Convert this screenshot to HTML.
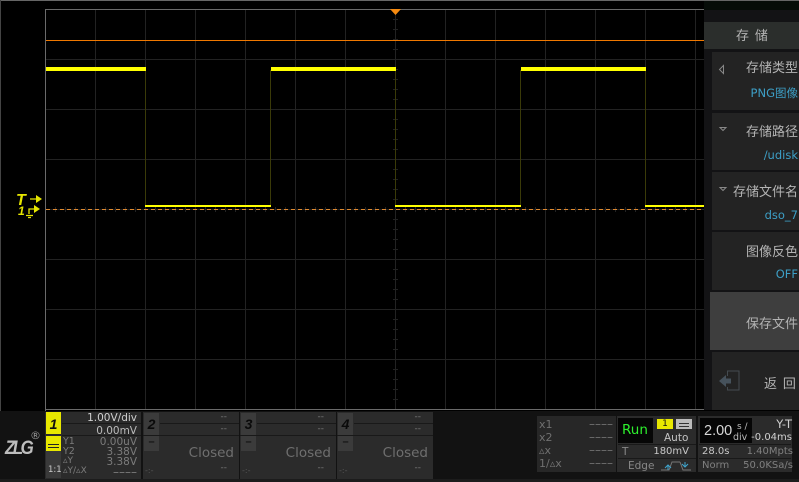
<!DOCTYPE html>
<html><head><meta charset="utf-8">
<style>
html,body{margin:0;padding:0;background:#000;}
#p{position:relative;width:799px;height:482px;overflow:hidden;background:#000;font-family:"DejaVu Sans","Liberation Sans","Noto Sans CJK SC",sans-serif;}
#p div{position:absolute;}
.t{white-space:nowrap;line-height:1;}
.r{text-align:right;}
.item{left:712px;width:87px;background:#232323;}
.cn{font-family:"Noto Sans CJK SC","WenQuanYi Zen Hei",sans-serif;font-size:13px;color:#b4b4b4;}
.bl{color:#3d9fc6;font-size:11.500px;}
.ch{background:#2b2b2b;width:96px;height:67px;top:412px;}
.sep{background:#191919;height:1px;}
.num{left:1px;top:1px;width:15px;height:22px;background:#3b3b3b;color:#0a0a0a;font:italic bold 14px/22px "Liberation Sans",sans-serif;text-align:center;}
.mn{left:1px;top:24px;width:15px;height:15px;background:#3b3b3b;color:#111;font:bold 11px/13px "Liberation Sans",sans-serif;text-align:center;}
.g{color:#777;}
.m{color:#7c7c7c;font-size:10.500px;}
.d{font-size:12px!important;}
.cl{color:#6f6f6f;font-size:13.500px;}
</style></head><body>
<div id="p">
<svg style="position:absolute;left:0;top:0" width="799" height="482">
<rect x="0" y="0" width="799" height="1" fill="#666"/>
<rect x="0" y="0" width="1" height="411" fill="#444"/>
<g stroke="#222" stroke-width="1" shape-rendering="crispEdges">
<path d="M95.5 10V409M145.5 10V409M195.5 10V409M245.5 10V409M295.5 10V409M345.5 10V409M395.5 10V409M445.5 10V409M495.5 10V409M545.5 10V409M595.5 10V409M645.5 10V409M695.5 10V409"/>
<path d="M46 59.5H704M46 109.5H704M46 159.5H704M46 209.5H704M46 259.5H704M46 309.5H704M46 359.5H704"/>
<path d="M393 19.5h5M393 29.5h5M393 39.5h5M393 49.5h5M393 69.5h5M393 79.5h5M393 89.5h5M393 99.5h5M393 119.5h5M393 129.5h5M393 139.5h5M393 149.5h5M393 169.5h5M393 179.5h5M393 189.5h5M393 199.5h5M393 219.5h5M393 229.5h5M393 239.5h5M393 249.5h5M393 269.5h5M393 279.5h5M393 289.5h5M393 299.5h5M393 319.5h5M393 329.5h5M393 339.5h5M393 349.5h5M393 369.5h5M393 379.5h5M393 389.5h5M393 399.5h5"/>
<path d="M55.5 207v5M65.5 207v5M75.5 207v5M85.5 207v5M105.5 207v5M115.5 207v5M125.5 207v5M135.5 207v5M155.5 207v5M165.5 207v5M175.5 207v5M185.5 207v5M205.5 207v5M215.5 207v5M225.5 207v5M235.5 207v5M255.5 207v5M265.5 207v5M275.5 207v5M285.5 207v5M305.5 207v5M315.5 207v5M325.5 207v5M335.5 207v5M355.5 207v5M365.5 207v5M375.5 207v5M385.5 207v5M405.5 207v5M415.5 207v5M425.5 207v5M435.5 207v5M455.5 207v5M465.5 207v5M475.5 207v5M485.5 207v5M505.5 207v5M515.5 207v5M525.5 207v5M535.5 207v5M555.5 207v5M565.5 207v5M575.5 207v5M585.5 207v5M605.5 207v5M615.5 207v5M625.5 207v5M635.5 207v5M655.5 207v5M665.5 207v5M675.5 207v5M685.5 207v5"/>
</g>
<rect x="45" y="9" width="659" height="1" fill="#6a6a6a"/>
<rect x="45" y="9" width="1" height="402" fill="#6a6a6a"/>
<rect x="45" y="409" width="659" height="1" fill="#6a6a6a"/>
<rect x="46" y="40" width="658" height="1" fill="#f07800"/>
<path d="M390 9h11l-5.500 6z" fill="#f58a10"/>
<line x1="46" y1="209.500" x2="704" y2="209.500" stroke="#e08a30" stroke-width="1" stroke-dasharray="4 3" shape-rendering="crispEdges"/>
<g fill="#3a3a08" shape-rendering="crispEdges">
<rect x="145" y="70" width="1" height="136"/><rect x="270" y="70" width="1" height="136"/>
<rect x="395" y="70" width="1" height="136"/><rect x="520" y="70" width="1" height="136"/>
<rect x="645" y="70" width="1" height="136"/>
</g>
<g fill="#ffff00" shape-rendering="crispEdges">
<rect x="46" y="67" width="100" height="4"/><rect x="271" y="67" width="125" height="4"/><rect x="521" y="67" width="125" height="4"/>
<rect x="145" y="205" width="126" height="2"/><rect x="395" y="205" width="126" height="2"/><rect x="645" y="205" width="59" height="2"/>
</g>
<g fill="none" stroke="#e6e600" stroke-width="1.300">
<path d="M30 199h6M29 214v-5h5"/>
<path d="M26 215.500h7M28 217.500h3"/>
</g>
<path d="M36 195l6 4-6 4zM34 205l6 4-6 4z" fill="#e6e600"/>
</svg>
<div class="t" style="left:16px;top:193px;color:#e6e600;font:italic bold 16px/16px 'Liberation Sans',sans-serif;">T</div>
<div class="t" style="left:18px;top:205px;color:#e6e600;font:italic bold 12px/12px 'Liberation Sans',sans-serif;">1</div>

<!-- right panel -->
<div style="left:704px;top:1px;width:95px;height:10px;background:#060c08;"></div>
<div style="left:704px;top:10px;width:95px;height:400px;background:#131315;"></div>
<div style="left:704px;top:22px;width:95px;height:27px;background:#2b2e2c;"></div>
<div class="t cn" style="left:736px;top:28px;letter-spacing:1.500px;">存 储</div>
<div class="item" style="top:52px;height:58px;"></div>
<div class="item" style="top:113px;height:57px;"></div>
<div class="item" style="top:172px;height:58px;"></div>
<div class="item" style="top:232px;height:58px;"></div>
<div class="item" style="left:710px;width:89px;top:292px;height:58px;background:#3e3e3e;"></div>
<div class="item" style="top:352px;height:58px;"></div>
<div class="t cn r" style="right:1px;top:60px;">存储类型</div>
<div class="t bl r" style="right:1px;top:88px;">PNG<span style="font-family:'Noto Sans CJK SC',sans-serif">图像</span></div>
<div class="t cn r" style="right:1px;top:124px;">存储路径</div>
<div class="t bl r" style="right:1px;top:150px;">/udisk</div>
<div class="t cn r" style="right:1px;top:184px;">存储文件名</div>
<div class="t bl r" style="right:1px;top:210px;">dso_7</div>
<div class="t cn r" style="right:1px;top:244px;">图像反色</div>
<div class="t bl r" style="right:1px;top:269px;">OFF</div>
<div class="t cn r" style="right:1px;top:316px;">保存文件</div>
<div class="t cn" style="left:764px;top:376px;letter-spacing:1.500px;">返 回</div>
<svg style="position:absolute;left:700px;top:60px" width="99" height="340">
<path d="M23.500 5.500v8l-4-4z" fill="none" stroke="#888"/>
<path d="M20 67.500h6l-3 3z" fill="none" stroke="#888"/>
<path d="M20 127.500h6l-3 3z" fill="none" stroke="#888"/>
<path d="M19 321l7-6v3.500h5v5h-5v3.500z" fill="#46525c"/>
<path d="M27.500 316v-5h11.500v19h-11.500v-3" fill="none" stroke="#444b50"/>
</svg>

<!-- bottom bar -->
<div style="left:0;top:411px;width:799px;height:71px;background:#121212;"></div>
<div style="left:0;top:479px;width:799px;height:3px;background:#1c1c1c;"></div>
<div class="t" style="left:5px;top:439px;color:#bdbdbd;font:italic bold 19px/19px 'Liberation Sans',sans-serif;letter-spacing:-3px;transform:scaleX(.9);transform-origin:left top;">ZLG</div>
<div class="t" style="left:30px;top:430px;color:#999;font-size:11px;">®</div>

<div class="ch" style="left:45px;">
<div style="left:1px;top:0;width:15px;height:22px;background:#e8e800;color:#111;font:italic bold 14px/24px 'Liberation Sans',sans-serif;text-align:center;">1</div>
<div style="left:1px;top:24px;width:15px;height:15px;background:#e8e800;"></div>
<div style="left:3px;top:32px;width:11px;height:1px;background:#222;"></div>
<div style="left:3px;top:35px;width:11px;height:1px;background:#222;"></div>
<div style="left:1px;top:39px;width:15px;height:27px;background:#3a3a3a;"></div>
<div class="t" style="left:3px;top:54px;color:#ccc;font-size:8.500px;">1:1</div>
<div class="sep" style="left:17px;top:11px;width:79px;"></div>
<div class="sep" style="left:17px;top:23px;width:79px;"></div>
<div class="t r" style="right:4px;top:1px;color:#d0d0d0;font-size:10.500px;">1.00V/div</div>
<div class="t r" style="right:4px;top:14px;color:#bbb;font-size:10.500px;">0.00mV</div>
<div class="t m" style="left:18px;top:25px;font-size:9.500px;">Y1</div>
<div class="t m" style="left:18px;top:35px;font-size:9.500px;">Y2</div>
<div class="t m" style="left:18px;top:45px;font-size:9px;">▵Y</div>
<div class="t m" style="left:18px;top:55px;font-size:9px;">▵Y/▵X</div>
<div class="t m r" style="right:4px;top:25px;">0.00uV</div>
<div class="t m r" style="right:4px;top:35px;">3.38V</div>
<div class="t m r" style="right:4px;top:45px;">3.38V</div>
<div class="t m r d" style="right:4px;top:54px;">––––</div>
</div>

<div class="ch" style="left:143px;"><div class="num">2</div><div class="mn">–</div>
<div class="sep" style="left:17px;top:11px;width:79px;"></div><div class="sep" style="left:0;top:23px;width:96px;"></div>
<div class="t g r" style="right:12px;top:1px;font-size:9px;">--</div><div class="t g r" style="right:12px;top:13px;font-size:9px;">--</div>
<div class="t r cl" style="right:5px;top:35px;">Closed</div>
<div class="t g r" style="right:12px;top:52px;font-size:9px;">--</div><div class="t" style="left:2px;top:55px;color:#555;font-size:8px;">-:-</div></div>
<div class="ch" style="left:240px;"><div class="num">3</div><div class="mn">–</div>
<div class="sep" style="left:17px;top:11px;width:79px;"></div><div class="sep" style="left:0;top:23px;width:96px;"></div>
<div class="t g r" style="right:12px;top:1px;font-size:9px;">--</div><div class="t g r" style="right:12px;top:13px;font-size:9px;">--</div>
<div class="t r cl" style="right:5px;top:35px;">Closed</div>
<div class="t g r" style="right:12px;top:52px;font-size:9px;">--</div><div class="t" style="left:2px;top:55px;color:#555;font-size:8px;">-:-</div></div>
<div class="ch" style="left:337px;"><div class="num">4</div><div class="mn">–</div>
<div class="sep" style="left:17px;top:11px;width:79px;"></div><div class="sep" style="left:0;top:23px;width:96px;"></div>
<div class="t g r" style="right:12px;top:1px;font-size:9px;">--</div><div class="t g r" style="right:12px;top:13px;font-size:9px;">--</div>
<div class="t r cl" style="right:5px;top:35px;">Closed</div>
<div class="t g r" style="right:12px;top:52px;font-size:9px;">--</div><div class="t" style="left:2px;top:55px;color:#555;font-size:8px;">-:-</div></div>

<!-- cursors -->
<div style="left:537px;top:416px;width:79px;height:56px;background:#272727;"></div>
<div class="t" style="left:539px;top:419px;color:#707070;font-size:11px;">x1</div>
<div class="t" style="left:539px;top:432px;color:#707070;font-size:11px;">x2</div>
<div class="t" style="left:539px;top:445px;color:#707070;font-size:11px;">▵x</div>
<div class="t" style="left:539px;top:458px;color:#707070;font-size:11px;">1/▵x</div>
<div class="t d" style="left:589px;top:418px;color:#707070;">––––</div>
<div class="t d" style="left:589px;top:431px;color:#707070;">––––</div>
<div class="t d" style="left:589px;top:444px;color:#707070;">––––</div>
<div class="t d" style="left:589px;top:457px;color:#707070;">––––</div>

<!-- trigger -->
<div style="left:617px;top:416px;width:79px;height:56px;background:#2b2b2b;"></div>
<div style="left:618px;top:418px;width:35px;height:25px;background:#060606;"></div>
<div class="t" style="left:622px;top:424px;color:#2ef02e;font:normal 13.500px/13px 'DejaVu Sans',sans-serif;">Run</div>
<div style="left:657px;top:419px;width:16px;height:10px;background:#e8e800;color:#111;font-size:9px;line-height:10px;text-align:center;">1</div>
<div style="left:676px;top:419px;width:16px;height:10px;background:#bbb;"></div>
<div style="left:679px;top:423px;width:10px;height:1px;background:#333;"></div>
<div style="left:679px;top:426px;width:10px;height:1px;background:#333;"></div>
<div class="t" style="left:664px;top:433px;color:#c4c4c4;font-size:10.500px;">Auto</div>
<div class="sep" style="left:618px;top:444px;width:78px;"></div>
<div class="sep" style="left:618px;top:458px;width:78px;"></div>
<div class="t" style="left:622px;top:447px;color:#888;font-size:10.500px;">T</div>
<div class="t r" style="right:110px;top:447px;color:#c8c8c8;font-size:10px;">180mV</div>
<div class="t" style="left:628px;top:461px;color:#888;font-size:10.500px;">Edge</div>
<svg style="position:absolute;left:660px;top:459px" width="32" height="13">
<path d="M1 11h8l3-8h8M20 3l3 8h8" fill="none" stroke="#777"/>
<path d="M5 9l3-3 3 3M8 6v5M22 5l3 3 3-3M25 3v5" fill="none" stroke="#3fa6cf"/>
</svg>

<!-- time -->
<div style="left:698px;top:416px;width:94px;height:56px;background:#2b2b2b;"></div>
<div style="left:700px;top:418px;width:52px;height:25px;background:#060606;"></div>
<div class="t" style="left:704px;top:424px;color:#d8d8d8;font:14.500px/14.500px 'Liberation Sans',sans-serif;">2.00</div>
<div class="t" style="left:737px;top:423px;color:#bbb;font-size:9px;">s /</div>
<div class="t" style="left:733px;top:433px;color:#bbb;font-size:9.500px;">div</div>
<div class="t r" style="right:7px;top:419px;color:#d0d0d0;font-size:11.500px;">Y-T</div>
<div class="t r" style="right:7px;top:433px;color:#d0d0d0;font-size:10px;">-0.04ms</div>
<div class="sep" style="left:699px;top:444px;width:92px;"></div>
<div class="sep" style="left:699px;top:458px;width:92px;"></div>
<div class="t" style="left:702px;top:447px;color:#c8c8c8;font-size:10px;">28.0s</div>
<div class="t r" style="right:6px;top:447px;color:#808080;font-size:10px;">1.40Mpts</div>
<div class="t" style="left:702px;top:461px;color:#808080;font-size:10px;">Norm</div>
<div class="t r" style="right:6px;top:461px;color:#808080;font-size:10px;">50.0KSa/s</div>
</div>
</body></html>
